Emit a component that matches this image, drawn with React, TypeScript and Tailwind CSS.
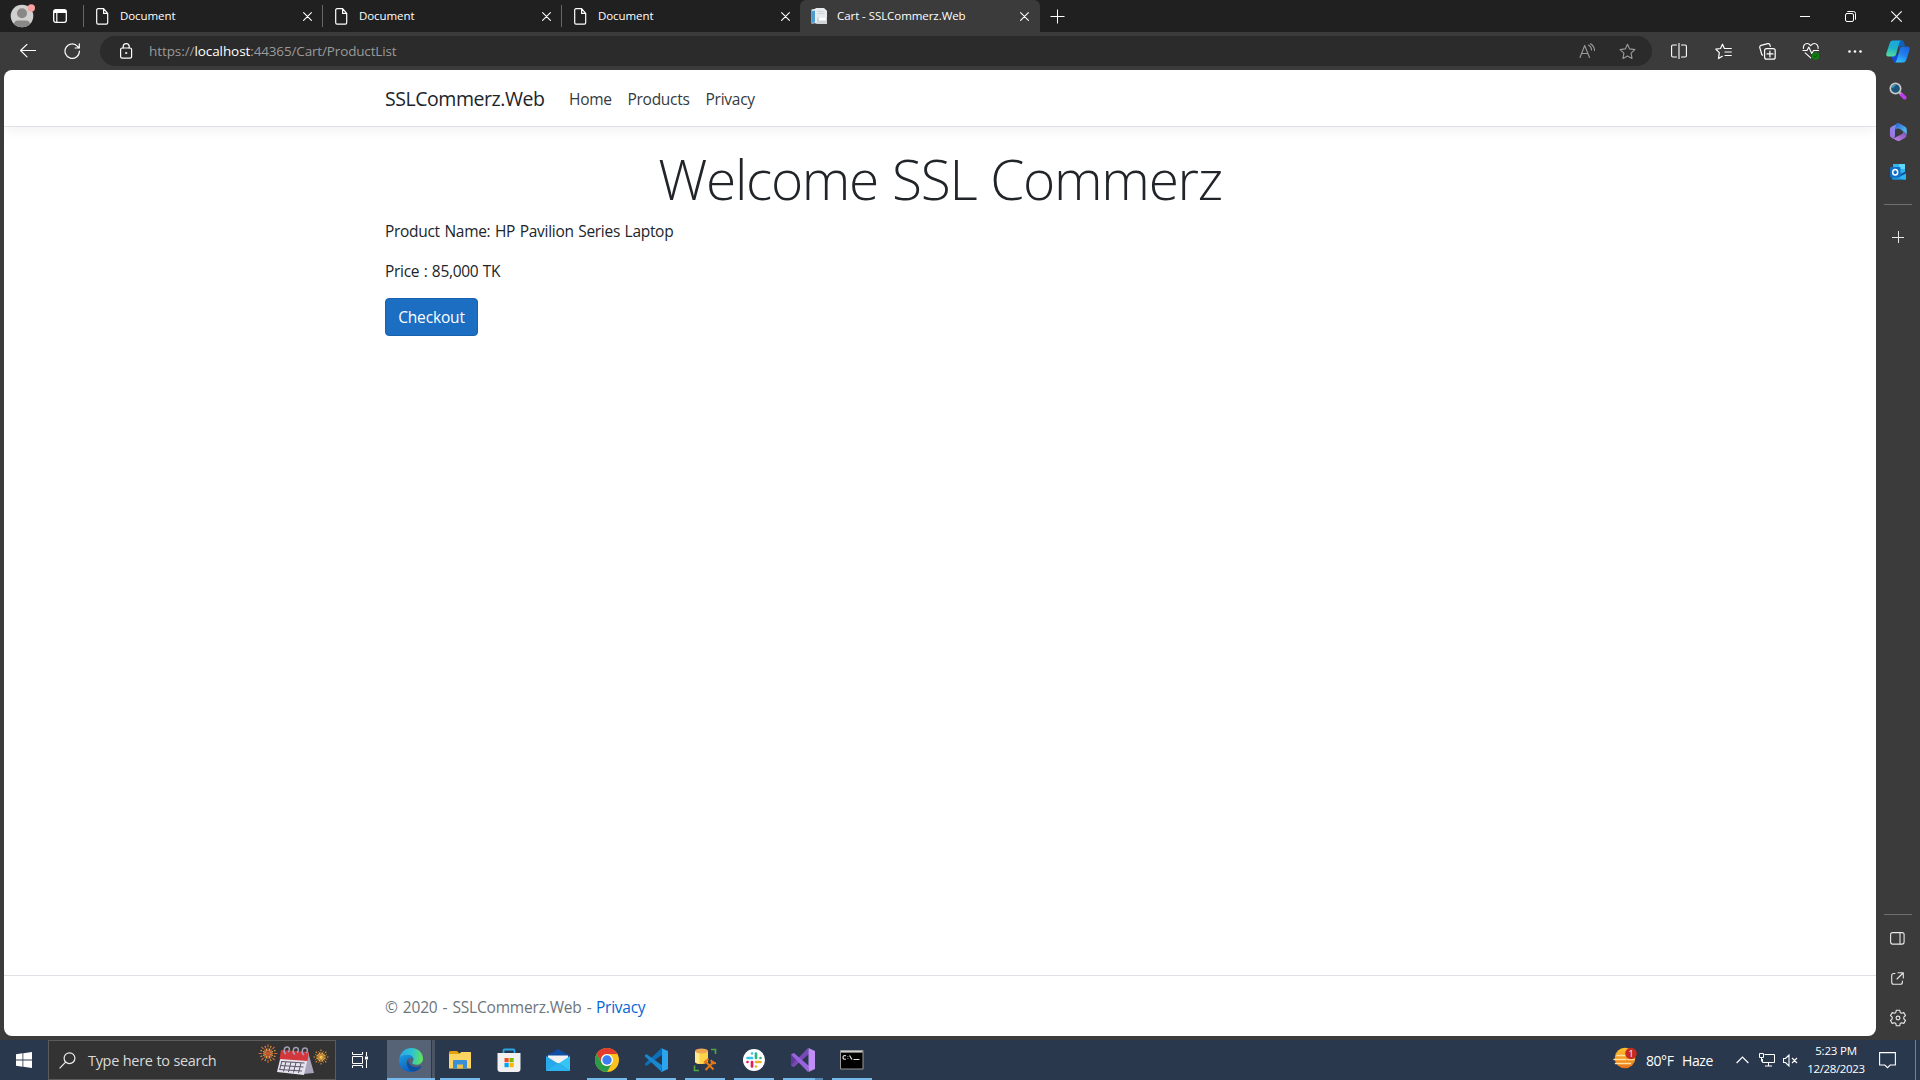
import type { ReactNode } from "react";

const stroke = { fill: "none", stroke: "currentColor", strokeLinecap: "round", strokeLinejoin: "round" } as const;

function Cell({ className, children }: { className: string; children: ReactNode }) {
  return <div className={`flex shrink-0 items-center justify-center ${className}`}>{children}</div>;
}

function CloseIcon() {
  return (
    <svg width="9" height="9" viewBox="0 0 9 9" {...stroke} strokeWidth="1.1">
      <path d="M.6.6l7.8 7.8M8.4.6L.6 8.4" />
    </svg>
  );
}

function DocIcon() {
  return (
    <svg width="13" height="17" viewBox="0 0 13 17" {...stroke} strokeWidth="1.2">
      <path d="M2 .7h5.600l4.100 4.700v9.400a1.300 1.300 0 0 1-1.300 1.300H2a1.300 1.300 0 0 1-1.300-1.300V2A1.300 1.300 0 0 1 2 .7zM7.600.9v4.500h4" />
    </svg>
  );
}

function Tab() {
  return (
    <div className="flex h-8 w-[239px] items-center border-l border-[#5d5d5d] [border-image:linear-gradient(transparent_18%,#666_18%,#666_82%,transparent_82%)_1]">
      <div className="ml-3 w-6">
        <DocIcon />
      </div>
      <span className="flex-1 text-[11.5px] tracking-[-0.08px]">Document</span>
      <div className="mr-[10px] mt-px">
        <CloseIcon />
      </div>
    </div>
  );
}

function TabStrip() {
  return (
    <div className="flex h-8 bg-[#202020] text-white">
      <div className="flex w-[83px] items-center">
        <svg className="ml-[10px]" width="26" height="26" viewBox="0 0 26 26">
          <defs>
            <clipPath id="av"><circle cx="12" cy="13" r="11.3" /></clipPath>
          </defs>
          <circle cx="12" cy="13" r="11.3" fill="#d2d0ce" />
          <g clipPath="url(#av)" fill="#8a8886">
            <circle cx="12" cy="10.3" r="5" />
            <path d="M4 25v-3.500a4 4 0 0 1 4-4h8a4 4 0 0 1 4 4V25z" />
          </g>
          <circle cx="21.300" cy="5" r="3.700" fill="#f7a1a0" />
        </svg>
        <svg className="ml-[17px]" width="14" height="14" viewBox="0 0 14 14">
          <rect x=".7" y=".7" width="12.6" height="12.600" rx="2" {...stroke} strokeWidth="1.3" />
          <path d="M.7 4V2.500A2 2 0 0 1 2.500.7h9a2 2 0 0 1 1.800 1.800V4z" fill="white" />
          <path d="M3.800 4v9" stroke="white" strokeWidth="1.200" />
        </svg>
      </div>
      <Tab />
      <Tab />
      <Tab />
      <div className="flex h-8 w-60 items-center rounded-t-md bg-[#3b3b3b]">
        <svg className="ml-[11px]" width="16" height="17" viewBox="0 0 16 17">
          <path d="M.5 1.500L5 .8V15l-4.500.7z" fill="#e9f1f7" />
          <path d="M1 3l3-.5v12L1 15z" fill="#4f9bd0" />
          <path d="M4.500 0h8.500l3 2.800v13H4.500z" fill="#e8ebed" />
          <path d="M6.500 3.500h6M6.500 5.500h7" stroke="#cfd4d8" />
          <path d="M6 9.500h10V16H6z" fill="#cfd4d8" />
          <path d="M8 9.500h7v3H8z" fill="#fff" />
        </svg>
        <span className="ml-[10px] flex-1 text-[11.5px] tracking-[-0.06px]">Cart - SSLCommerz.Web</span>
        <div className="mr-[11px] mt-px">
          <CloseIcon />
        </div>
      </div>
      <Cell className="w-[35px]">
        <svg width="15" height="15" viewBox="0 0 15 15" stroke="white" strokeWidth="1">
          <path d="M7.500.5v14M.5 7.500h14" />
        </svg>
      </Cell>
      <div className="ml-auto flex">
        <Cell className="w-[46px]">
          <svg width="10" height="10"><path d="M0 5.500h10" stroke="white" /></svg>
        </Cell>
        <Cell className="w-[46px] pr-px">
          <svg width="11" height="11" viewBox="0 0 11 11" {...stroke}>
            <rect x=".5" y="2.500" width="8" height="8" rx="1.500" />
            <path d="M2.700.5h5.800a2 2 0 0 1 2 2v5.800" />
          </svg>
        </Cell>
        <Cell className="w-[46px] pr-px">
          <svg width="11" height="11" viewBox="0 0 11 11" {...stroke} strokeWidth="1.100">
            <path d="M.6.6l9.800 9.800M10.400.6L.6 10.400" />
          </svg>
        </Cell>
      </div>
    </div>
  );
}

const STAR = "M8.500 1.200l2.200 4.700 5.200.7-3.800 3.600.9 5.200-4.500-2.500L4 15.400l.9-5.200L1.100 6.600l5.200-.7z";

function Toolbar() {
  return (
    <div className="flex h-[38px] items-center bg-[#3b3b3b] text-white">
      <Cell className="w-[56px]">
        <svg width="17" height="14" viewBox="0 0 17 14" {...stroke} strokeWidth="1.100">
          <path d="M15.600 6.500H.6M7 .3L.6 6.500l6.400 6.400" />
        </svg>
      </Cell>
      <Cell className="w-[32px]">
        <svg width="17" height="17" viewBox="0 0 17 17" {...stroke} strokeWidth="1.200">
          <path d="M15.400 8.200A7.200 7.200 0 1 1 13.500 3.300L15 5M15.300.8v4.200h-4.200" />
        </svg>
      </Cell>
      <div className="ml-3 flex h-[30px] w-[1552px] items-center rounded-full bg-[#2b2b2b]">
        <svg className="mb-px ml-5" width="13" height="16" viewBox="0 0 13 16" {...stroke} strokeWidth="1.200">
          <rect x=".6" y="5" width="11" height="10.200" rx="1.600" />
          <path d="M3.200 5V3.600a3 3 0 0 1 6 0V5" />
          <circle cx="6.100" cy="10" r=".7" fill="currentColor" strokeWidth=".6" />
        </svg>
        <div className="ml-4 flex whitespace-pre text-[13.5px] text-[#9a9a9a]">
          <span className="tracking-[-0.08px]">https://</span>
          <span className="tracking-[-0.08px] text-white">localhost</span>
          <span className="tracking-[-0.15px]">:44365/Cart/ProductList</span>
        </div>
        <div className="ml-auto flex pr-[5px] text-[#9a9a9a]">
          <Cell className="w-10">
            <svg width="17" height="16" viewBox="0 0 17 16" {...stroke} strokeWidth="1.100">
              <path d="M1 14.500L5.700 2.500l4.800 12M2.600 10.500h6.300M9.500 2a5.500 5.500 0 0 1 3 5M11.500.7a8 8 0 0 1 4 6.800" />
            </svg>
          </Cell>
          <Cell className="w-10">
            <svg width="17" height="17" viewBox="0 0 17 17" {...stroke} strokeWidth="1.100"><path d={STAR} /></svg>
          </Cell>
        </div>
      </div>
      <Cell className="ml-[5px] w-[44px]">
        <svg width="16" height="16" viewBox="0 0 16 16" {...stroke} strokeWidth="1.100">
          <path d="M8 0v16M5.500 2H2A1.300 1.300 0 0 0 .6 3.300v9.400A1.300 1.300 0 0 0 2 14h3.500M10.500 2H14a1.300 1.300 0 0 1 1.400 1.300v9.400A1.300 1.300 0 0 1 14 14h-3.500" />
        </svg>
      </Cell>
      <Cell className="w-[44px]">
        <svg width="17" height="17" viewBox="0 0 17 17" {...stroke} strokeWidth="1.200">
          <path d="M9.300 5.300L7.500 1.200 5.500 5.500l-4.700.7 3.500 3.500L3.500 15.600l3.800-2.300M10 5.500h6.300M10 9h6.300M10 12.500h6.300" />
        </svg>
      </Cell>
      <Cell className="w-[44px]">
        <svg width="17" height="17" viewBox="0 0 17 17" {...stroke} strokeWidth="1.200">
          <rect x="5.600" y="5.600" width="10.600" height="10.600" rx="2" />
          <path d="M10.900 8v6M8 10.900h6M3.600 12.200L2.800 11.500.8 4.600a1.800 1.800 0 0 1 1.300-2.200L8.700.7a1.800 1.800 0 0 1 2.200 1.200l.4 1.400" />
        </svg>
      </Cell>
      <Cell className="w-[44px]">
        <svg width="18" height="18" viewBox="0 0 18 18" {...stroke} strokeWidth="1.100">
          <path d="M1.400 6.500C1 3.500 3 1.500 5 1.500S8 2.700 8.700 3.600C9.400 2.700 10.500 1.500 12.500 1.500s4 2 3.600 5M1 8.500h4L6.800 5l3 6.500 1.700-3h5M3.200 10.800l5.500 5" />
          <circle cx="13.500" cy="14" r="3.800" fill="#0f7b0f" stroke="none" />
          <path d="M12 14.200l1 1 2-2.100" stroke="#0a4d0a" strokeWidth="1" />
        </svg>
      </Cell>
      <Cell className="w-[44px]">
        <svg width="14" height="3" viewBox="0 0 14 3" fill="white">
          <circle cx="1.500" cy="1.500" r="1.300" /><circle cx="7" cy="1.500" r="1.300" /><circle cx="12.500" cy="1.500" r="1.300" />
        </svg>
      </Cell>
      <Cell className="w-[41px]">
        <svg width="24" height="23" viewBox="0 0 24 23">
          <defs>
            <linearGradient id="cpa" x1=".5" y1="0" x2=".3" y2="1">
              <stop offset="0" stopColor="#19a8e0" /><stop offset=".45" stopColor="#1dafc9" /><stop offset="1" stopColor="#53dda0" />
            </linearGradient>
            <linearGradient id="cpb" x1=".8" y1="0" x2=".3" y2="1">
              <stop offset="0" stopColor="#1b64e0" /><stop offset=".5" stopColor="#2380ee" /><stop offset="1" stopColor="#2fc0fb" />
            </linearGradient>
          </defs>
          <path d="M10.500.5h5.800c1.200 0 1.300 1 1.700 2.200L19 6h-2.500c-2 0-2.700.8-3.200 2.500z" fill="#0b62bd" />
          <path d="M5 16h3c2 0 2.600-1 3-2.500l1 9H9c-1.200 0-1.600-1-2-2.200z" fill="#1848d8" />
          <path d="M15.500.5H7C4.800.5 4 2 3.300 4.300L.5 13c-.8 2.400.3 3.500 2.300 3.500h4.300c1.900 0 2.700-1 3.200-2.800l2.600-9.400C13.500 2 14 .5 15.500.5z" fill="url(#cpa)" />
          <path d="M8.500 22.500H17c2.200 0 3-1.500 3.700-3.800l2.800-8.700c.8-2.400-.3-3.500-2.300-3.500h-4.300c-1.900 0-2.700 1-3.200 2.800l-2.600 9.400c-.6 2.300-1.100 3.800-2.600 3.800z" fill="url(#cpb)" />
        </svg>
      </Cell>
    </div>
  );
}

function SideBar() {
  return (
    <div className="flex w-11 flex-col items-center bg-[#3b3b3b] pr-px text-[#e8e8e8]">
      <Cell className="h-[42px]">
        <svg width="18" height="18" viewBox="0 0 18 18">
          <path d="M12 12l3.600 3.600" stroke="#c43af2" strokeWidth="3.800" strokeLinecap="round" />
          <path d="M10 10l2 2" stroke="#aaa" strokeWidth="2" />
          <circle cx="6.500" cy="6.500" r="5.200" fill="#1c5577" stroke="#c9c9c9" strokeWidth="1.700" />
          <path d="M3.500 6a3 3 0 0 1 3-2.600" fill="none" stroke="#3fa5cf" strokeWidth="1.300" />
        </svg>
      </Cell>
      <Cell className="h-10">
        <svg width="18" height="18" viewBox="0 0 18 18">
          <defs>
            <linearGradient id="ma" x1="0" y1="1" x2="1" y2="0"><stop stopColor="#a66ad8" /><stop offset="1" stopColor="#6d9df5" /></linearGradient>
            <linearGradient id="mb" x1="0" y1="0" x2="1" y2="1"><stop stopColor="#2f5fd0" /><stop offset="1" stopColor="#55d3fb" /></linearGradient>
            <linearGradient id="mc" x1="0" y1="1" x2="1" y2="0"><stop stopColor="#c58bea" /><stop offset="1" stopColor="#7d4db5" /></linearGradient>
          </defs>
          <path d="M9.500.3L2.400 3.700A3 3 0 0 0 .9 6.300v6A3 3 0 0 0 2.400 14.800c2 1 3.600-.3 3.600-1.800V7.500C6 5.500 7 3.500 9.500.3z" fill="url(#ma)" />
          <path d="M6.800.9a4 4 0 0 1 4.400-.2l5 3a3 3 0 0 1 1.500 2.600V12c-.2-1-1-1.800-2-2.300L11.500 6.300A4 4 0 0 0 6.500 6.800z" fill="url(#mb)" />
          <path d="M3 15c2 .5 4-.5 5-1.500l5-2.500c1-.8 1.200-1.500 1-3l2 1.500c2 1.500 2 4 .2 5.200l-4.900 2.900a3.500 3.500 0 0 1-3.500 0z" fill="url(#mc)" />
          <path d="M9 6.200l3.200 1.600v3L9 12.300 6.800 11V7.500z" fill="#3b3b3b" />
        </svg>
      </Cell>
      <Cell className="h-10">
        <svg width="18" height="18" viewBox="0 0 18 18">
          <path d="M4 1h12v10H4z" fill="#32b4ee" /><path d="M10 1h6v5h-6z" fill="#5cd8ff" />
          <path d="M3 9l14 1v5.500a1.200 1.200 0 0 1-1.200 1.200H4.200A1.200 1.200 0 0 1 3 15.500z" fill="#1a8fdc" />
          <path d="M17 9.500L8 15l8 1.700c1-.4 1-.9 1-1.500z" fill="#2eb3f3" />
          <path d="M17 8l-6 4 1 1 5-2.500z" fill="#124f8f" />
          <rect x="1" y="4" width="10.500" height="10.500" rx="1" fill="#0f6fc6" />
          <ellipse cx="6.200" cy="9.200" rx="2.500" ry="2.800" fill="none" stroke="white" strokeWidth="1.500" />
        </svg>
      </Cell>
      <div className="mt-3 h-px w-7 shrink-0 bg-[#6f6f6f]" />
      <Cell className="mt-3 h-10">
        <svg width="12" height="12" viewBox="0 0 12 12" stroke="#e8e8e8"><path d="M6.500 0v12M0 6.500h12" /></svg>
      </Cell>
      <div className="flex-1" />
      <div className="h-px w-7 shrink-0 bg-[#6f6f6f]" />
      <Cell className="mt-[3px] h-10">
        <svg width="15" height="13" viewBox="0 0 15 13" {...stroke} strokeWidth="1.100">
          <rect x=".6" y=".6" width="13.500" height="11.500" rx="2" /><path d="M10 1v11" />
        </svg>
      </Cell>
      <Cell className="h-10">
        <svg width="13" height="13" viewBox="0 0 13 13" {...stroke} strokeWidth="1.100">
          <path d="M4 1.500H2.800A2 2 0 0 0 .7 3.500v6.700a2 2 0 0 0 2 2h6.700a2 2 0 0 0 2-2V9M7 .7h5.300V6M12 1L6 7" />
        </svg>
      </Cell>
      <Cell className="-mb-[2px] h-10">
        <svg width="18" height="18" viewBox="0 0 18 18" {...stroke} strokeWidth="1.100">
          <path d="M7.300 1.200h3.400l.5 2.300 1.300.8 2.300-.7 1.700 2.900-1.700 1.600v1.800l1.700 1.600-1.700 2.900-2.300-.7-1.300.8-.5 2.300H7.300l-.5-2.300-1.300-.8-2.300.7-1.700-2.900 1.700-1.600V8.100L1.500 6.500l1.700-2.900 2.300.7 1.300-.8z" />
          <circle cx="9" cy="9" r="1.900" />
        </svg>
      </Cell>
    </div>
  );
}

function WebPage() {
  return (
    <div className="ml-1 flex flex-1 flex-col overflow-hidden rounded-lg bg-white text-[15.5px] leading-6 text-[#212529]">
      <header className="h-[57px] border-b border-[#dee2e6] shadow-[0_4px_12px_rgba(0,0,0,0.05)]">
        <nav className="mx-auto flex h-14 w-[1140px] items-center px-[15px] pt-px text-[#343a40]">
          <span className="w-[176px] pt-px text-[19.5px] tracking-[-0.45px] text-[#212529]">SSLCommerz.Web</span>
          <span className="w-[58.500px] pl-2 tracking-[-0.25px]">Home</span>
          <span className="w-[78px] pl-2 tracking-[-0.28px]">Products</span>
          <span className="pl-2 tracking-[-0.250px]">Privacy</span>
        </nav>
      </header>
      <main className="mx-auto mt-4 w-[1140px] flex-1 px-[15px]">
        <h1 className="mb-[7px] pt-[2px] text-center text-[55px] font-light leading-[67px] tracking-[-1.300px] [word-spacing:1px]">
          Welcome SSL Commerz
        </h1>
        <p className="mb-4 tracking-[-0.30px] [word-spacing:0.9px]">Product Name: HP Pavilion Series Laptop</p>
        <p className="mb-4 tracking-[-0.30px] [word-spacing:0.7px]">Price : 85,000 TK</p>
        <button className="-mt-px flex h-[38px] w-[93px] items-center justify-center rounded border border-[#1861ac] bg-[#1b6ec2] text-white tracking-[-0.150px]">
          Checkout
        </button>
      </main>
      <footer className="h-[61px] border-t border-[#dee2e6]">
        <div className="mx-auto flex h-[60px] w-[1140px] items-center px-[15px] pt-px text-[#6c757d]">
          <span className="w-[211px] tracking-[-0.180px] [word-spacing:1.200px]">© 2020 - SSLCommerz.Web -</span>
          <span className="tracking-[-0.250px] text-[#0366d6]">Privacy</span>
        </div>
      </footer>
    </div>
  );
}

function Burst({ x, y, r, c, core }: { x: number; y: number; r: number; c: string; core: string }) {
  return (
    <g transform={`translate(${x} ${y})`}>
      {Array.from({ length: 16 }, (_, i) => (
        <path key={i} d={`M0 ${-r * 0.25}V${i % 2 ? -r * 0.85 : -r}`} transform={`rotate(${i * 22.5})`} stroke={i % 2 ? "#e8b04a" : c} strokeDasharray="3 1" strokeWidth="1.100" />
      ))}
      <circle r={r * 0.25} fill={core} />
    </g>
  );
}

function SearchBox() {
  return (
    <div className="flex h-10 w-72 items-center border border-[#5c5c5c] bg-[#333333]">
      <svg className="ml-[10px]" width="17" height="17" viewBox="0 0 17 17" fill="none" stroke="#eee" strokeWidth="1.200">
        <circle cx="10.500" cy="6.200" r="5.400" /><path d="M6.600 10.200L.6 16.300" />
      </svg>
      <span className="ml-3 pt-px text-[14.5px] tracking-[-0.330px] [word-spacing:0.4px] text-[#dadada]">Type here to search</span>
      <svg className="ml-auto mr-[5px]" width="72" height="34" viewBox="0 0 72 34">
        <Burst x={10} y={10.5} r={9.5} c="#d9653a" core="#c9532e" />
        <Burst x={63} y={14} r={7.500} c="#e58a35" core="#ffc94a" />
        <path d="M50 9l6 21-11 1z" fill="#a9a3ba" />
        <path d="M24 8l27 2-5 22-27-3z" fill="#e6e3ef" />
        <path d="M23 7l28 2-1.500 9-28-2z" fill="#d3373c" />
        <path d="M23.500 18.500l23 1.500M22.500 22.500l23 1.500M21.500 26.500l22.500 1.500M28 18.500l-2.500 10M33 19l-2.500 10M38 19.500l-2.500 10M43 20l-2.500 10M24 18l-2.500 9" stroke="#5a5666" strokeWidth="1" fill="none" />
        <g fill="none" stroke="#a5a1b8" strokeWidth="1.500">
          <path d="M28 11c-3-2-2-7 1-7s3 4 1 5M37 11.500c-3-2-2-7 1-7s3 4 1 5M46 12c-3-2-2-7 1-7s3 4 1 5" />
        </g>
      </svg>
    </div>
  );
}

const EdgeIcon = (
  <svg width="24" height="24" viewBox="0 0 24 24">
    <defs>
      <linearGradient id="e1" x1="0" y1=".4" x2="1" y2=".5"><stop stopColor="#2ba8e8" /><stop offset=".5" stopColor="#2cc3d2" /><stop offset="1" stopColor="#62e35a" /></linearGradient>
      <linearGradient id="e2" x1="0" y1="0" x2=".4" y2="1"><stop stopColor="#1b9de2" /><stop offset="1" stopColor="#0b62c4" /></linearGradient>
    </defs>
    <path d="M.4 10.500C1.500 4 6.500 0 12.300 0 19 0 24 4.700 24 10.500c0 4-3 6.300-6.500 6.300-3 0-4.300-1.100-4.300-2 0-.7 1.200-1.200 1.200-3.300 0-2.400-2.200-4.600-5.600-4.600C5 6.900 2 8.500.4 10.500z" fill="url(#e1)" />
    <path d="M.4 10.500C2 8 5 6.800 8.500 6.800c4 0 6 2.400 6 4.700-1-1.600-2.500-2-4-1.600C7 11 6.500 15 8.300 18.500c1.300 2.500 4 4.500 6.200 5.200C7 25.500 0 20 0 12.500z" fill="url(#e2)" />
    <path d="M9.200 11.500c-3 4.500-.5 11 5.300 12.200 3.500-.6 6.300-2.500 7.900-5.200.3-.5-.1-.8-.6-.5-5 2.500-12.600.5-12.600-6.500z" fill="#104f9f" />
  </svg>
);

const ExplorerIcon = (
  <svg width="22" height="20" viewBox="0 0 22 20">
    <path d="M0 2.500A1.500 1.500 0 0 1 1.500 1H8l2 2h10.500A1.500 1.500 0 0 1 22 4.500V18H0z" fill="#e3a10c" />
    <path d="M0 4h11l1-2h9.500l.5.500V18.500H0z" fill="#fcd462" />
    <path d="M4 11a1 1 0 0 1 1-1h12a1 1 0 0 1 1 1v7.500h-4V15H8v3.500H4z" fill="#3a8fd8" />
    <path d="M8 14.500h6v4H8z" fill="#e9c04c" />
  </svg>
);

const StoreIcon = (
  <svg width="24" height="24" viewBox="0 0 24 24">
    <path d="M6.500 6V2.500A1 1 0 0 1 7.500 1.500h9a1 1 0 0 1 1 1V6" fill="none" stroke="#2aa6e8" strokeWidth="1.800" />
    <path d="M.5 5h23v16a3 3 0 0 1-3 3h-17a3 3 0 0 1-3-3z" fill="#f1f1f1" />
    <path d="M7.500 10h4.200v4.200H7.500z" fill="#f25022" /><path d="M12.500 10h4.200v4.200h-4.200z" fill="#7fba00" />
    <path d="M7.500 15h4.200v4.200H7.500z" fill="#00a4ef" /><path d="M12.500 15h4.200v4.200h-4.200z" fill="#ffb900" />
  </svg>
);

const MailIcon = (
  <svg width="24" height="22" viewBox="0 0 24 22">
    <path d="M0 7l12-7 12 7v3H0z" fill="#0f4fa3" />
    <path d="M2 6.500h20v8H2z" fill="#f2f2f2" />
    <path d="M0 7l24 15H1a1 1 0 0 1-1-1z" fill="#27a8ea" />
    <path d="M24 7L12.500 14.500 24 22z" fill="#34c5f5" /><path d="M0 22l12.500-7.500L24 22z" fill="#2bb4f0" />
  </svg>
);

const ChromeIcon = (
  <svg width="24" height="24" viewBox="0 0 24 24">
    <circle cx="12" cy="12" r="12" fill="#fcc31e" />
    <path d="M1.600 6A12 12 0 0 1 22.400 6H12a6 6 0 0 0-5.200 9z" fill="#e33b2e" />
    <path d="M1.600 6A12 12 0 0 0 12 24l5.200-9a6 6 0 0 1-10.400 0z" fill="#2a9c49" />
    <circle cx="12" cy="12" r="6" fill="#fff" /><circle cx="12" cy="12" r="4.700" fill="#3a7ff0" />
  </svg>
);

const CodeIcon = (
  <svg width="24" height="24" viewBox="0 0 24 24">
    <path d="M1 15.500L17.500.3 18 6.800 3 17.500c-.4.300-1 .2-1.300-.1l-.8-.8c-.3-.3-.3-.8.100-1.100z" fill="#0d70b8" />
    <path d="M1 8.500l16.500 15.200.5-6.500L3 6.500c-.4-.3-1-.2-1.300.1l-.8.800c-.3.300-.3.800.100 1.100z" fill="#1a88d0" />
    <path d="M17.500.2L24 3v18l-6.500 2.900c-.5.100-1 0-1.300-.4.700.5 1.800.1 1.800-.9V1.400c0-1-1.100-1.400-1.800-.9.300-.4.800-.5 1.300-.3z" fill="#2ba5ee" />
  </svg>
);

const DatabaseIcon = (
  <svg width="24" height="24" viewBox="0 0 24 24">
    <path d="M18 1.500h4.500V6M1.500 17.500v5H6" fill="none" stroke="#4fa83d" strokeWidth="1.600" />
    <path d="M2 3v10.500c0 1.500 3 2.500 6.500 2.500s6.500-1 6.500-2.500V3z" fill="#fbd24a" />
    <path d="M2 4v9.500c0 1.500 2 2.200 4.500 2.400V4z" fill="#ffe98a" />
    <ellipse cx="8.500" cy="3" rx="6.500" ry="2.600" fill="#eda552" />
    <path d="M12 13l8.500 8.500M21 13.500L12.500 22M11 14.500l4.500-3.500M18 12l1.500 3.500 3.500-.5" stroke="#e57717" strokeWidth="2" fill="none" />
  </svg>
);

const SlackIcon = (
  <svg width="22" height="22" viewBox="0 0 22 22">
    <circle cx="11" cy="11" r="11" fill="#fff" />
    <g fill="none" strokeWidth="2.700" strokeLinecap="round">
      <path d="M9 4.500v0M4.500 9H9" stroke="#36c5f0" /><path d="M17.500 9v0M13 4.500V9" stroke="#2eb67d" />
      <path d="M13 17.500v0M13 13h4.500" stroke="#ecb22e" /><path d="M4.500 13v0M9 13v4.500" stroke="#e01e5a" />
    </g>
  </svg>
);

const StudioIcon = (
  <svg width="24" height="24" viewBox="0 0 24 24">
    <path d="M0 6.500L3 5l5.500 6.800L3 19l-3-1.500z" fill="#62399b" />
    <path d="M3 19l-3-1.500L17 0l1 6z" fill="#7a49b8" />
    <path d="M3 5L0 6.500 17 24l1-6z" fill="#9a63dd" />
    <path d="M17.500 0L24 3v18l-6.500 3z" fill="#c08ff5" />
  </svg>
);

const TerminalIcon = (
  <svg width="24" height="20" viewBox="0 0 24 20">
    <path d="M.5.5h22.500v18.500H.5z" fill="#000" stroke="#9a9a9a" />
    <path d="M1 1h21.500v1.600H1z" fill="#d0d0d0" />
    <path d="M6 5.800c-2.500-.8-3 .5-3 1.700s.8 2.200 3 1.500M7.800 6.200v.6M7.800 8.500v.6M9.500 5.500l2.500 4M13.500 9.500h6" stroke="#e0e0e0" strokeWidth="1.200" fill="none" />
  </svg>
);

const APPS = [
  { icon: EdgeIcon, state: "active" }, { icon: ExplorerIcon, state: "open" }, { icon: StoreIcon, state: "idle" },
  { icon: MailIcon, state: "idle" }, { icon: ChromeIcon, state: "open" }, { icon: CodeIcon, state: "open" },
  { icon: DatabaseIcon, state: "open" }, { icon: SlackIcon, state: "open" }, { icon: StudioIcon, state: "stacked" },
  { icon: TerminalIcon, state: "open" },
];

function AppButton({ icon, state }: { icon: ReactNode; state: string }) {
  if (state === "active") {
    return (
      <div className="flex w-12 flex-col">
        <div className="flex flex-1">
          <div className="flex w-11 items-center justify-center bg-[#566275] pl-1 pt-px">{icon}</div>
          <div className="ml-px w-[3px] bg-[#4a5462]" />
        </div>
        <div className="h-0.5 bg-[#76b9ed]" />
      </div>
    );
  }
  return (
    <div className="flex w-[49px] flex-col items-center">
      <div className="flex flex-1 items-center justify-center pt-0.5">{icon}</div>
      <div className="flex h-0.5 w-10">
        {state !== "idle" && <div className="flex-1 bg-[#76b9ed]" />}
        {state === "stacked" && <div className="w-2 bg-[#5288b5]" />}
      </div>
    </div>
  );
}

function Taskbar() {
  return (
    <div className="flex h-10 bg-[#29384c] text-white">
      <Cell className="w-12">
        <svg width="16" height="16" viewBox="0 0 16 16" fill="white">
          <path d="M0 2.200L6.500 1.300v6.300H0zM7.300 1.200L16 0v7.600H7.300zM0 8.400h6.500v6.300L0 13.800zM7.300 8.400H16V16l-8.700-1.200z" />
        </svg>
      </Cell>
      <SearchBox />
      <Cell className="w-[51px] pr-[3px]">
        <svg width="17" height="16" viewBox="0 0 17 16" fill="none" stroke="white" strokeWidth="1">
          <path d="M.5 0v2.500h10V0M.5 16v-2.500h10V16M.5 4.500h10v7H.5zM14.500 0v4M14.500 8v8" />
          <path d="M13 4.500h3v3h-3z" fill="white" stroke="none" />
        </svg>
      </Cell>
      {APPS.map((a, i) => (
        <AppButton key={i} icon={a.icon} state={a.state} />
      ))}
      <div className="ml-auto flex items-center">
        <svg className="-mt-1" width="24" height="22" viewBox="0 0 24 22">
          <defs>
            <linearGradient id="sun" x1="0" y1="0" x2="0" y2="1"><stop stopColor="#ffc22e" /><stop offset="1" stopColor="#e8731a" /></linearGradient>
          </defs>
          <circle cx="12" cy="11" r="10.300" fill="url(#sun)" />
          <path d="M4 8.500h12M1 12.500h12M15 12.500h6M2.500 16.500h15" stroke="#ffe2a0" strokeWidth="1.500" strokeLinecap="round" />
          <circle cx="18" cy="6.500" r="5.800" fill="#c52b21" />
          <text x="18" y="9.800" fontSize="9" textAnchor="middle" fill="white">1</text>
        </svg>
        <span className="ml-[9px] w-[36px] text-[14px] tracking-[-0.450px]">80°F</span>
        <span className="w-[54px] text-[14px] tracking-[-0.400px]">Haze</span>
        <svg width="13" height="8" viewBox="0 0 13 8" fill="none" stroke="white" strokeWidth="1.200"><path d="M.6 7l5.900-6 5.900 6" /></svg>
        <svg className="ml-[10px]" width="16" height="14" viewBox="0 0 16 14" fill="none" stroke="white">
          <path d="M5.500 1.500h10v8H3.500V6M9.500 9.500v3.500M6 13h7M.5.500h4v4h-4zM2.500 4.500v4" />
        </svg>
        <svg className="ml-2" width="15" height="13" viewBox="0 0 15 13" fill="none" stroke="white" strokeWidth="1.100">
          <path d="M.5 4.500h2L6 1v11L2.500 8.500h-2zM9 4l5 5M14 4L9 9" />
        </svg>
        <div className="ml-[7px] w-[62px] text-center text-[11.5px] leading-[18px]">
          <div className="tracking-[-0.200px]">5:23 PM</div>
          <div className="tracking-[-0.350px]">12/28/2023</div>
        </div>
        <svg className="ml-[12px]" width="17" height="17" viewBox="0 0 17 17" fill="none" stroke="white" strokeWidth="1.100">
          <path d="M.6.600h15.800v12.400h-5.200l-2.700 2.700L5.800 13H.6z" />
        </svg>
        <div className="ml-[19px] h-10 w-[5px] border-l border-[#76818f]" />
      </div>
    </div>
  );
}

export default function App() {
  return (
    <div className="flex h-[1080px] w-[1920px] flex-col overflow-hidden bg-[#3b3b3b] font-['Open_Sans','Noto_Sans',sans-serif]">
      <TabStrip />
      <Toolbar />
      <div className="mb-1 flex h-[966px]">
        <WebPage />
        <SideBar />
      </div>
      <Taskbar />
    </div>
  );
}
